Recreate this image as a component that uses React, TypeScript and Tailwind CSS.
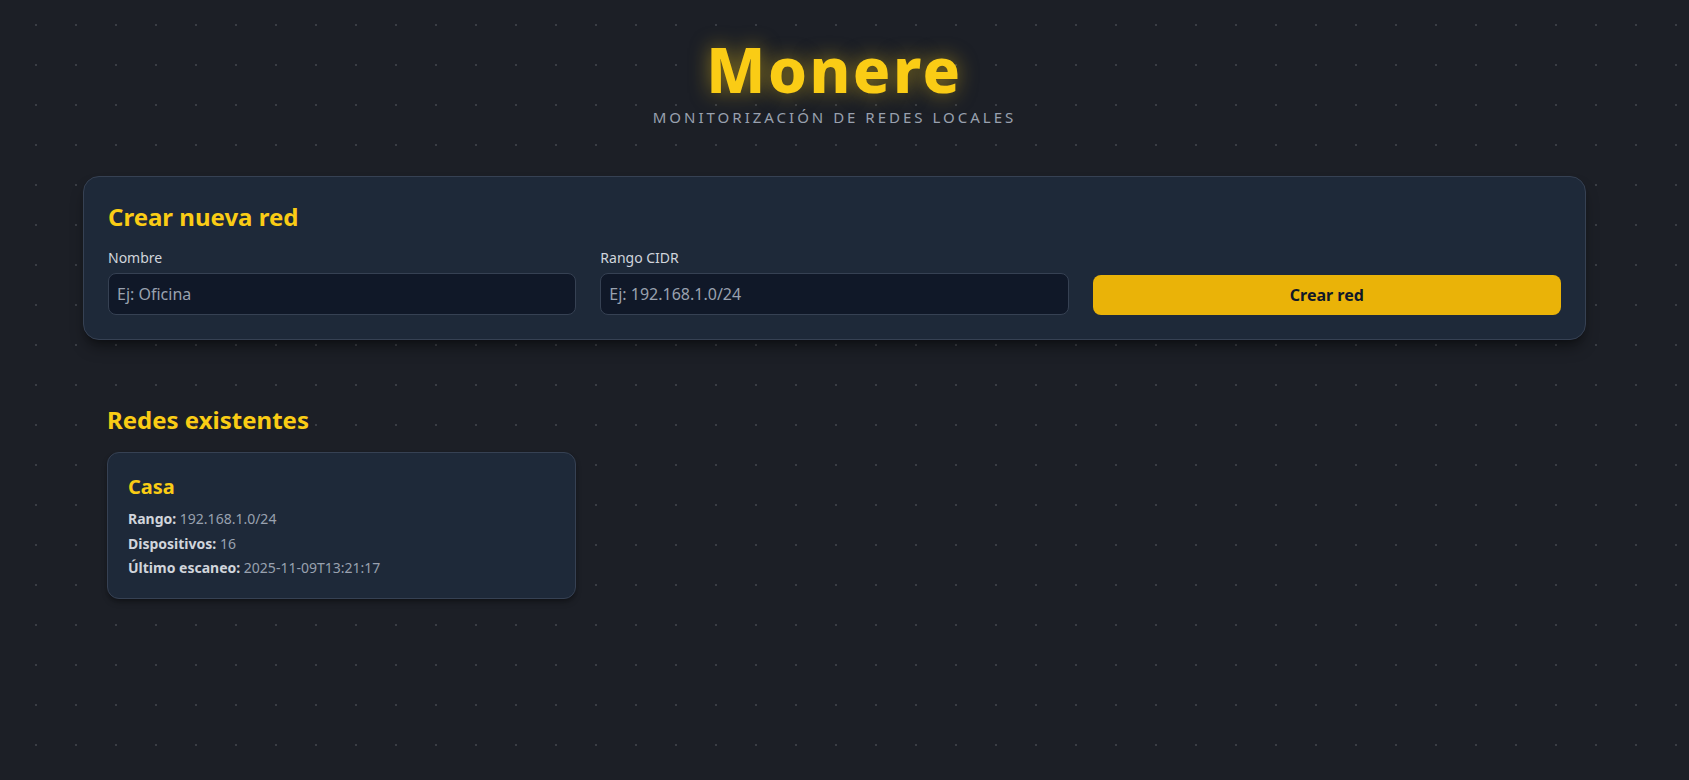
import { useState } from 'react';

type Network = {
  id: number;
  name: string;
  cidr: string;
  devices: number;
  lastScan: string;
};

const networks: Network[] = [
  { id: 1, name: 'Casa', cidr: '192.168.1.0/24', devices: 16, lastScan: '2025-11-09T13:21:17' },
];

export default function App() {
  const [name, setName] = useState('');
  const [cidr, setCidr] = useState('');

  return (
    <div
      className="min-h-screen bg-[#1c1f26] bg-[radial-gradient(#3a3d44_1.3px,transparent_1.4px)] bg-[length:40px_40px] bg-[position:16px_5px] pb-10 font-['Noto_Sans',sans-serif] text-gray-300"
    >
      <div className="ml-[83px] w-[1503px]">
        {/* cabecera */}
        <header className="pt-[38px] text-center">
          <h1 className="text-[62px] font-extrabold leading-none tracking-[0.04em] text-[#facc15] [text-shadow:0_0_20px_rgba(250,204,21,0.5)]">
            Monere
          </h1>
          <p className="mt-[6px] text-[15px] leading-[22px] tracking-[0.2em] text-gray-400 uppercase">
            Monitorización de redes locales
          </p>
        </header>

        {/* formulario */}
        <section className="mt-[48px] rounded-2xl border border-gray-700 bg-gray-800 p-6 shadow-lg shadow-black/40">
          <h2 className="mb-[15px] text-2xl font-bold text-[#facc15]">Crear nueva red</h2>
          <div className="grid grid-cols-3 items-end gap-6">
            <div>
              <label className="mb-[5px] block text-sm text-gray-300">Nombre</label>
              <input
                value={name}
                onChange={e => setName(e.target.value)}
                placeholder="Ej: Oficina"
                className="w-full rounded-lg border border-gray-700 bg-gray-900 px-2 py-2 text-base leading-6 text-gray-200 placeholder:text-gray-400 outline-none"
              />
            </div>
            <div>
              <label className="mb-[5px] block text-sm text-gray-300">Rango CIDR</label>
              <input
                value={cidr}
                onChange={e => setCidr(e.target.value)}
                placeholder="Ej: 192.168.1.0/24"
                className="w-full rounded-lg border border-gray-700 bg-gray-900 px-2 py-2 text-base leading-6 text-gray-200 placeholder:text-gray-400 outline-none"
              />
            </div>
            <button className="h-10 rounded-lg bg-[#eab308] text-base font-bold text-gray-900">Crear red</button>
          </div>
        </section>

        {/* listado */}
        <section className="mt-10 p-6">
          <h2 className="mb-4 text-2xl font-bold text-[#facc15]">Redes existentes</h2>
          <div className="grid grid-cols-3 gap-6">
            {networks.map(n => (
              <div key={n.id} className="rounded-xl border border-gray-700 bg-gray-800 p-5 shadow-md shadow-black/30">
                <h3 className="mb-2 text-xl font-bold text-[#facc15]">{n.name}</h3>
                <div className="space-y-[4.5px] text-sm">
                  <p className="text-gray-400">
                    <span className="font-bold text-gray-300">Rango:</span> {n.cidr}
                  </p>
                  <p className="text-gray-400">
                    <span className="font-bold text-gray-300">Dispositivos:</span> {n.devices}
                  </p>
                  <p className="text-gray-400">
                    <span className="font-bold text-gray-300">Último escaneo:</span> {n.lastScan}
                  </p>
                </div>
              </div>
            ))}
          </div>
        </section>
      </div>
    </div>
  );
}
